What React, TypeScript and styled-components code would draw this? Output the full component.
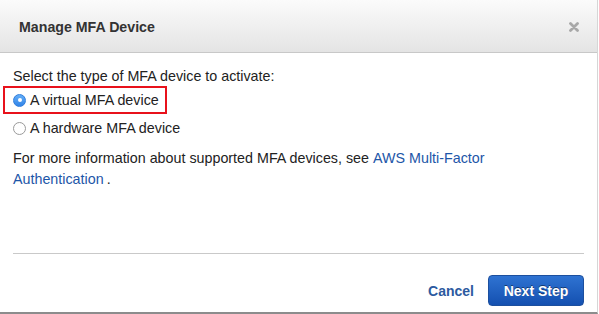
import React from "react";
import styled, { createGlobalStyle } from "styled-components";

const Global = createGlobalStyle`
  html, body {
    margin: 0;
    padding: 0;
    background: #ffffff;
  }
  body {
    font-family: "Liberation Sans", Arial, sans-serif;
    color: #222;
  }
`;

const Modal = styled.div`
  width: 597px;
  height: 312px;
  background: #fff;
  border-right: 1px solid #d6d6d6;
  border-bottom: 2px solid #8c8c8c;
  display: flex;
  flex-direction: column;
`;

const Header = styled.div`
  height: 53px;
  box-sizing: border-box;
  padding: 0 18px 0 19px;
  display: flex;
  align-items: center;
  justify-content: space-between;
  background: linear-gradient(to bottom, #fbfbfb, #e4e4e4);
  border-bottom: 1px solid #c8c8c8;
`;

const Title = styled.h3`
  margin: 0;
  font-size: 14.2px;
  font-weight: bold;
  color: #333;
  padding-top: 1px;
`;

const Close = styled.button`
  border: none;
  background: none;
  padding: 0;
  margin-top: 1px;
  width: 10px;
  height: 10px;
  cursor: pointer;
  display: flex;
`;

const Body = styled.div`
  flex: 1;
  padding: 14px 13px 0 13px;
  font-size: 14.3px;
`;

const Prompt = styled.div`
  line-height: 18px;
  margin-bottom: 1px;
`;

const Option = styled.label<{ $highlight?: boolean }>`
  display: flex;
  align-items: center;
  gap: 4px;
  height: 22px;
  width: 147px;
  margin-left: ${({ $highlight }) => ($highlight ? "-10px" : "0")};
  padding: ${({ $highlight }) => ($highlight ? "1px 5px 1px 8px" : "0")};
  border: ${({ $highlight }) => ($highlight ? "2px solid #e8111b" : "none")};
  margin-top: ${({ $highlight }) => ($highlight ? "0" : "3px")};
  line-height: 22px;
  white-space: nowrap;
`;

const Radio = styled.span<{ $checked?: boolean }>`
  width: 13px;
  height: 13px;
  border-radius: 50%;
  box-sizing: border-box;
  flex: none;
  display: flex;
  align-items: center;
  justify-content: center;
  background: ${({ $checked }) =>
    $checked ? "linear-gradient(to bottom, #64aef7, #3184e8)" : "#fff"};
  border: 1px solid ${({ $checked }) => ($checked ? "#2f7ddc" : "#9a9a9a")};

  &::after {
    content: "";
    display: ${({ $checked }) => ($checked ? "block" : "none")};
    width: 4px;
    height: 4px;
    border-radius: 50%;
    background: #fff;
  }
`;

const Info = styled.p`
  margin: 9px 0 0 0;
  line-height: 21px;
  width: 520px;
`;

const Link = styled.a`
  color: #1d56a8;
  text-decoration: none;
  margin-left: 4px;
  margin-right: 3px;
`;

const Divider = styled.hr`
  margin: 0 13px;
  border: none;
  border-top: 1px solid #c9c9c9;
`;

const Footer = styled.div`
  height: 58px;
  box-sizing: border-box;
  display: flex;
  align-items: flex-start;
  justify-content: flex-end;
  gap: 14px;
  padding: 21px 13px 0 0;
`;

const CancelButton = styled.button`
  border: none;
  background: none;
  font-family: inherit;
  font-size: 14px;
  font-weight: bold;
  color: #2c5aa0;
  padding: 0;
  height: 31px;
  cursor: pointer;
`;

const PrimaryButton = styled.button`
  height: 31px;
  width: 96px;
  border: 1px solid #1c4f9e;
  border-radius: 4px;
  background: linear-gradient(to bottom, #2f73d2, #1450b0);
  color: #fff;
  font-family: inherit;
  font-size: 14px;
  font-weight: bold;
  text-shadow: 0 -1px 0 rgba(0, 0, 0, 0.45);
  cursor: pointer;
`;

export default function App() {
  return (
    <>
      <Global />
      <Modal>
        <Header>
          <Title>Manage MFA Device</Title>
          <Close aria-label="Close">
            <svg width="10" height="10" viewBox="0 0 10 10">
              <path
                d="M1.5 1.5 L8.5 8.5 M8.5 1.5 L1.5 8.5"
                stroke="#a8a8a8"
                strokeWidth="2.8"
                strokeLinecap="round"
              />
            </svg>
          </Close>
        </Header>
        <Body>
          <Prompt>Select the type of MFA device to activate:</Prompt>
          <Option $highlight>
            <Radio $checked />
            A virtual MFA device
          </Option>
          <Option>
            <Radio />
            A hardware MFA device
          </Option>
          <Info>
            For more information about supported MFA devices, see
            <Link href="#">AWS Multi-Factor Authentication</Link>.
          </Info>
        </Body>
        <Divider />
        <Footer>
          <CancelButton>Cancel</CancelButton>
          <PrimaryButton>Next Step</PrimaryButton>
        </Footer>
      </Modal>
    </>
  );
}
